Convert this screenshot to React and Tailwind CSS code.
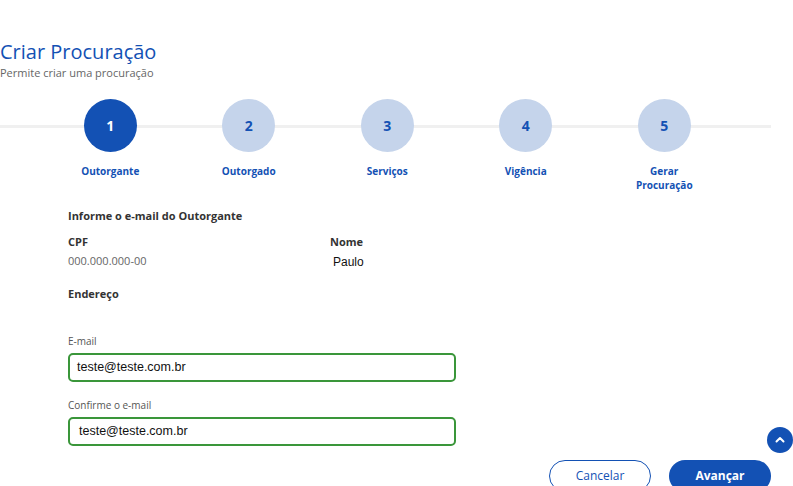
import React from 'react';

const steps = [
  { n: 1, label: 'Outorgante', active: true },
  { n: 2, label: 'Outorgado' },
  { n: 3, label: 'Serviços' },
  { n: 4, label: 'Vigência' },
  { n: 5, label: 'Gerar Procuração' },
];

function Stepper() {
  return (
    <div className="relative w-[771px] mt-[19px]">
      {/* track behind the circles */}
      <div className="absolute left-0 right-0 top-[26px] h-[3px] bg-[#f0f0f0]" />
      <div className="relative flex pl-[41px]">
        {steps.map((s) => (
          <div key={s.n} className="w-[138.5px] flex flex-col items-center">
            <div
              className={
                s.active
                  ? 'w-[53px] h-[53px] rounded-full bg-[#1351b4] text-white flex items-center justify-center text-[14px] font-bold'
                  : 'w-[53px] h-[53px] rounded-full bg-[#c5d4eb] text-[#1351b4] flex items-center justify-center text-[14px] font-bold'
              }
            >
              {s.n}
            </div>
            <div className="mt-[12px] w-[80px] text-center text-[10px] leading-[14px] font-bold text-[#1351b4]">
              {s.label}
            </div>
          </div>
        ))}
      </div>
    </div>
  );
}

function EmailField({ label, value, top, indent }) {
  return (
    <div className={top}>
      <div className="text-[10px] leading-[14px] text-[#555]">{label}</div>
      <div className={`mt-[5px] w-[388px] h-[29px] rounded-[5px] border-2 border-[#3a963a] flex items-center ${indent} font-['Liberation_Sans',sans-serif] text-[12.5px] text-[#111]`}>
        {value}
      </div>
    </div>
  );
}

export default function App() {
  return (
    <div className="relative w-[793px] h-[486px] overflow-hidden bg-white font-['Open_Sans',sans-serif]">
      <div className="pt-[38px]">
        <h1 className="text-[20px] leading-[28px] text-[#1351b4]">Criar Procuração</h1>
        <p className="text-[11px] leading-[14px] text-[#666]">Permite criar uma procuração</p>
      </div>

      <Stepper />

      <div className="pl-[68px]">
        <div className="mt-[17px] text-[11px] leading-[14px] font-bold text-[#333]">
          Informe o e-mail do Outorgante
        </div>

        <div className="mt-[12px] flex">
          <div className="w-[262px]">
            <div className="text-[11px] leading-[14px] font-bold text-[#333]">CPF</div>
            <div className="mt-[5px] text-[11px] leading-[14px] text-[#666]">000.000.000-00</div>
          </div>
          <div>
            <div className="text-[11px] leading-[14px] font-bold text-[#333]">Nome</div>
            <div className="mt-[6px] pl-[3px] font-['Liberation_Sans',sans-serif] text-[12px] leading-[14px] text-[#111]">
              Paulo
            </div>
          </div>
        </div>

        <div className="mt-[18px] text-[11px] leading-[14px] font-bold text-[#333]">Endereço</div>

        <EmailField label="E-mail" value="teste@teste.com.br" top="mt-[33px]" indent="pl-[7px]" />
        <EmailField label="Confirme o e-mail" value="teste@teste.com.br" top="mt-[16px]" indent="pl-[9px]" />

        <div className="mt-[14px] flex justify-end w-[703px] gap-[18px]">
          <button className="w-[102px] h-[32px] rounded-full border border-[#1351b4] text-[#1351b4] text-[12px] bg-white">
            Cancelar
          </button>
          <button className="w-[102px] h-[32px] rounded-full bg-[#1351b4] text-white text-[12px] font-bold">
            Avançar
          </button>
        </div>
      </div>

      {/* back to top */}
      <button className="absolute left-[767px] top-[427px] w-[26px] h-[26px] rounded-full bg-[#1351b4] flex items-center justify-center">
        <svg width="12" height="12" viewBox="0 0 24 24" fill="none" stroke="white" strokeWidth="4" strokeLinecap="round" strokeLinejoin="round">
          <path d="M5 15l7-7 7 7" />
        </svg>
      </button>
    </div>
  );
}
